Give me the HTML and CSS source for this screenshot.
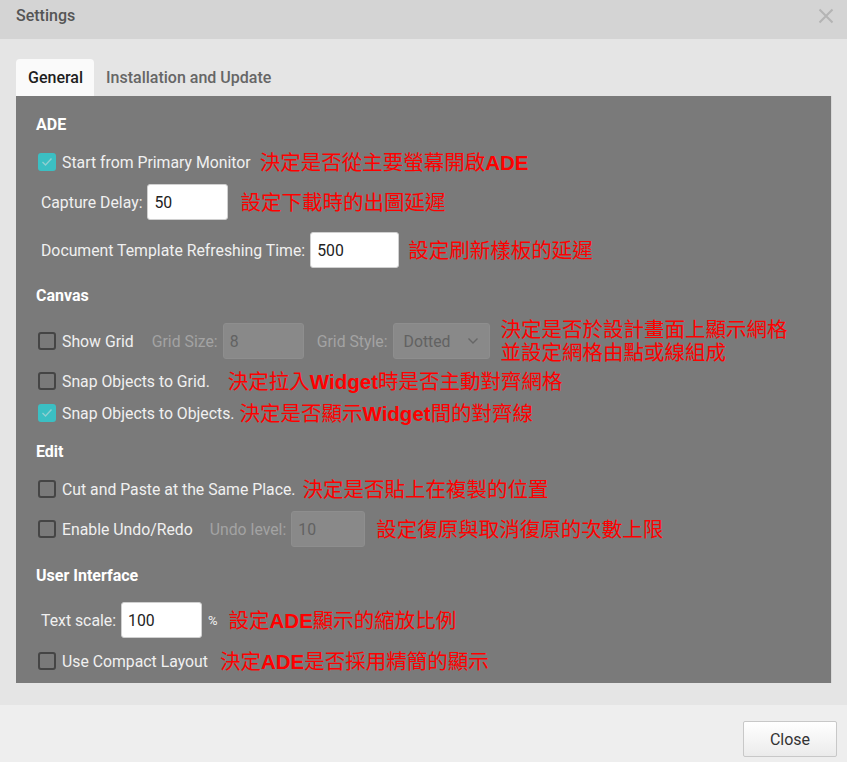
FILE: index.html
```html
<!DOCTYPE html>
<html>
<head>
<meta charset="utf-8">
<link rel="stylesheet" href="styles.css">
</head>
<body>
<div class="dialog">
  <div class="titlebar">
    <span class="title">Settings</span>
    <svg class="close-x" width="16" height="16" viewBox="0 0 16 16"><path d="M1.5 1.5 L14.5 14.5 M14.5 1.5 L1.5 14.5" stroke="#b4b4b4" stroke-width="2" fill="none"/></svg>
  </div>
  <div class="body">
    <div class="tabs">
      <div class="tab active">General</div>
      <div class="tab">Installation and Update</div>
    </div>
    <div class="panel">
      <div class="sec sec-first">ADE</div>
      <div class="row r-check m13">
        <span class="cb checked"><svg width="12" height="10" viewBox="0 0 12 10"><path d="M1.5 5 L4.5 8 L10.5 1.5" stroke="#8fcfd1" stroke-width="1.4" fill="none"/></svg></span>
        <span class="lbl">Start from Primary Monitor</span>
        <span class="note">決定是否從主要螢幕開啟<b>ADE</b></span>
      </div>
      <div class="row r-input m8 ind">
        <span class="lbl">Capture Delay:</span>
        <span class="inp w81">50</span>
        <span class="note n12">設定下載時的出圖延遲</span>
      </div>
      <div class="row r-input m12 ind">
        <span class="lbl">Document Template Refreshing Time:</span>
        <span class="inp w89">500</span>
        <span class="note">設定刷新樣板的延遲</span>
      </div>

      <div class="sec m18">Canvas</div>
      <div class="row r-input m17">
        <span class="cb"></span>
        <span class="lbl">Show Grid</span>
        <span class="lbl dis ml18">Grid Size:</span>
        <span class="inp dinp w81">8</span>
        <span class="lbl dis ml13">Grid Style:</span>
        <span class="inp dinp sel">Dotted<svg width="12" height="8" viewBox="0 0 12 8"><path d="M1.5 1.5 L6 6 L10.5 1.5" stroke="#666" stroke-width="1.4" fill="none"/></svg></span>
        <span class="note n11 two">決定是否於設計畫面上顯示網格<br>並設定網格由點或線組成</span>
      </div>
      <div class="row r-check m8">
        <span class="cb"></span>
        <span class="lbl">Snap Objects to Grid.</span>
        <span class="note n18">決定拉入<b>Widget</b>時是否主動對齊網格</span>
      </div>
      <div class="row r-check m4">
        <span class="cb checked"><svg width="12" height="10" viewBox="0 0 12 10"><path d="M1.5 5 L4.5 8 L10.5 1.5" stroke="#8fcfd1" stroke-width="1.4" fill="none"/></svg></span>
        <span class="lbl">Snap Objects to Objects.</span>
        <span class="note n5">決定是否顯示<b>Widget</b>間的對齊線</span>
      </div>

      <div class="sec m15">Edit</div>
      <div class="row r-check m13">
        <span class="cb"></span>
        <span class="lbl">Cut and Paste at the Same Place.</span>
        <span class="note n7">決定是否貼上在複製的位置</span>
      </div>
      <div class="row r-input m8">
        <span class="cb"></span>
        <span class="lbl">Enable Undo/Redo</span>
        <span class="lbl dis ml17">Undo level:</span>
        <span class="inp dinp w74">10</span>
        <span class="note n11">設定復原與取消復原的次數上限</span>
      </div>

      <div class="sec m19">User Interface</div>
      <div class="row r-input m16 ind">
        <span class="lbl">Text scale:</span>
        <span class="inp w81">100</span>
        <span class="lbl pct">%</span>
        <span class="note n11">設定<b>ADE</b>顯示的縮放比例</span>
      </div>
      <div class="row r-check m9">
        <span class="cb"></span>
        <span class="lbl">Use Compact Layout</span>
        <span class="note n12">決定<b>ADE</b>是否採用精簡的顯示</span>
      </div>
    </div>
  </div>
  <div class="footer">
    <button class="btn">Close</button>
  </div>
</div>
</body>
</html>
```

FILE: styles.css
```css
* { box-sizing: border-box; }
html, body { margin: 0; padding: 0; }
body {
  width: 847px;
  height: 762px;
  overflow: hidden;
  font-family: Roboto, "Liberation Sans", sans-serif;
  background: #eeeeee;
}
.dialog { display: flex; flex-direction: column; height: 762px; }
.titlebar {
  height: 39px;
  background: #d4d4d4;
  display: flex;
  align-items: center;
  justify-content: space-between;
  padding: 0 13px 8px 16px;
}
.title { font-size: 16px; font-weight: 500; color: #555; }
.close-x { margin-top: 0; }
.body {
  background: #e5e5e5;
  padding: 20px 15px 22px 16px;
}
.tabs { display: flex; height: 37px; }
.tab {
  display: flex;
  align-items: center;
  padding: 0 12px;
  font-size: 16px;
  font-weight: 500;
  color: #666;
}
.tab.active {
  background: #fafafa;
  color: #1e1e1e;
  border-radius: 4px 4px 0 0;
  width: 78px;
}
.panel {
  background: #7a7a7a;
  height: 587px;
  padding: 19px 20px 0 20px;
  border-right: 1px solid #d8d8d8;
  color: #f2f2f2;
}
.sec { font-size: 16px; font-weight: 700; color: #fff; height: 20px; line-height: 20px; }
.row { display: flex; align-items: center; font-size: 15.8px; }
.r-check { height: 28px; }
.r-input { height: 36px; }
.ind { padding-left: 5px; }
.m4 { margin-top: 4px; }
.m8 { margin-top: 8px; }
.m9 { margin-top: 9px; }
.m12 { margin-top: 12px; }
.m13 { margin-top: 13px; }
.m15 { margin-top: 15px; }
.m16 { margin-top: 16px; }
.m17 { margin-top: 17px; }
.m18 { margin-top: 18px; }
.m19 { margin-top: 19px; }
.cb {
  width: 18px;
  height: 18px;
  border: 2px solid #454545;
  border-radius: 3px;
  margin-left: 2px;
  margin-right: 6px;
  display: flex;
  align-items: center;
  justify-content: center;
  flex: none;
}
.cb.checked { background: #3bbfc3; border-color: #3bbfc3; }
.lbl { color: #f0f0f0; white-space: nowrap; }
.lbl.dis { color: #a3a3a3; }
.ml18 { margin-left: 18px; }
.ml13 { margin-left: 13px; }
.ml17 { margin-left: 17px; }
.pct { margin-left: 6px; font-size: 13px; }
.inp {
  height: 36px;
  background: #fff;
  border: 1px solid #d0d0d0;
  border-radius: 3px;
  margin-left: 5px;
  display: flex;
  align-items: center;
  padding-left: 6px;
  font-size: 15.8px;
  color: #222;
  flex: none;
}
.inp.dinp { background: #898989; border-color: #8e8e8e; color: #626262; }
.w74 { width: 74px; }
.w81 { width: 81px; }
.w89 { width: 89px; }
.sel { width: 97px; padding-left: 10px; padding-right: 10px; justify-content: space-between; }
.note {
  font-family: "Liberation Sans", "Noto Sans CJK TC", sans-serif;
  font-size: 20.5px;
  color: #ff0000;
  margin-left: 9px;
  white-space: nowrap;
  line-height: 23px;
}
.note b { font-weight: 700; }
.n5 { margin-left: 5px; }
.n7 { margin-left: 7px; }
.n11 { margin-left: 11px; }
.n12 { margin-left: 12px; }
.n18 { margin-left: 18px; }
.footer {
  flex: 1;
  background: #eeeeee;
  display: flex;
  justify-content: flex-end;
  align-items: flex-start;
  padding: 16px 10px 0 0;
}
.btn {
  width: 94px;
  height: 36px;
  background: linear-gradient(#ffffff, #ebebeb);
  border: 1px solid #c8c8c8;
  border-radius: 2px;
  font-family: Roboto, "Liberation Sans", sans-serif;
  font-size: 16px;
  color: #333;
}
```
